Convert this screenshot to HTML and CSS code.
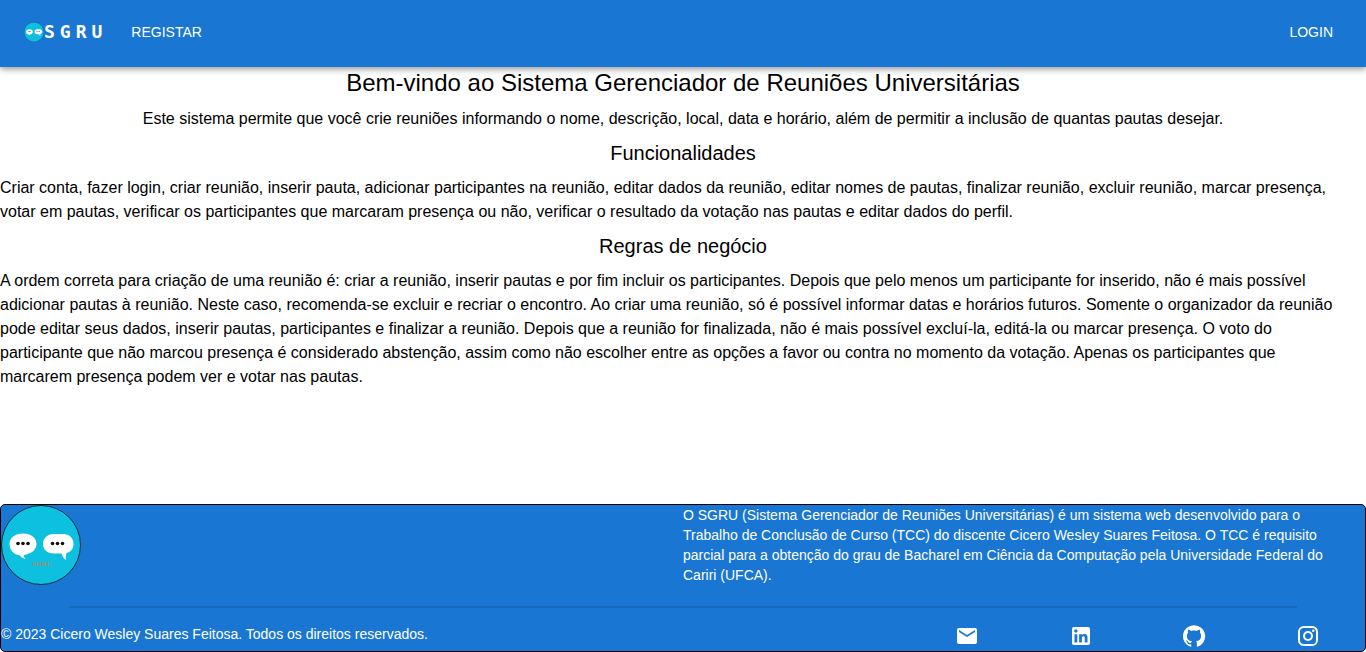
FILE: index.html
```html
<!DOCTYPE html>
<html lang="pt-BR">
<head>
<meta charset="utf-8">
<meta name="viewport" content="width=device-width, initial-scale=1">
<title>SGRU</title>
<link rel="stylesheet" href="styles.css">
</head>
<body>
<svg class="sprite" aria-hidden="true">
  <symbol id="logo" viewBox="0 0 80 80">
    <circle cx="40" cy="40" r="39.5" fill="#0dc0df" stroke="#0c2f40"/>
    <path fill="#fff" d="M22 28.500c8 0 13.500 4.500 13.500 10.500 0 5-4 9-9.500 10.200-1 .4-2.700.5-3.200 1.300-.3 1 .8 2.600 2 3.700-2.600-.6-5-2.200-6.300-4C12.500 49.500 8.500 45 8.500 39c0-6 5.500-10.500 13.500-10.500z"/>
    <path fill="#fff" d="M53 29h9c7 0 10.500 4.500 10.500 10 0 4.500-2.500 8-7 9-.8 2-.5 5-.9 7-1.800-1.500-3.300-3.600-4.100-6.500H53c-7 0-11-4-11-9.500S46 29 53 29z"/>
    <g fill="#111"><circle cx="17" cy="38.500" r="1.800"/><circle cx="22" cy="38.500" r="1.800"/><circle cx="27" cy="38.500" r="1.800"/><circle cx="51.500" cy="38.500" r="1.800"/><circle cx="56.500" cy="38.500" r="1.800"/><circle cx="61.500" cy="38.500" r="1.800"/></g>
    <text x="40.500" y="61" text-anchor="middle" class="logo-caption">SGRU</text>
  </symbol>
</svg>
<header class="appbar">
  <nav class="toolbar">
    <a class="brand" href="#"><svg class="brand-icon" aria-hidden="true"><use href="#logo"/></svg><span>SGRU</span></a>
    <a class="nav-link" href="#">REGISTAR</a>
    <a class="nav-link nav-end" href="#">LOGIN</a>
  </nav>
</header>
<main class="content">
  <h1 class="title">Bem-vindo ao Sistema Gerenciador de Reuniões Universitárias</h1>
  <p class="text centered">Este sistema permite que você crie reuniões informando o nome, descrição, local, data e horário, além de permitir a inclusão de quantas pautas desejar.</p>
  <h2 class="subtitle">Funcionalidades</h2>
  <p class="text body-text">Criar conta, fazer login, criar reunião, inserir pauta, adicionar participantes na reunião, editar dados da reunião, editar nomes de pautas, finalizar reunião, excluir reunião, marcar presença, votar em pautas, verificar os participantes que marcaram presença ou não, verificar o resultado da votação nas pautas e editar dados do perfil.</p>
  <h2 class="subtitle">Regras de negócio</h2>
  <p class="text body-text">A ordem correta para criação de uma reunião é: criar a reunião, inserir pautas e por fim incluir os participantes. Depois que pelo menos um participante for inserido, não é mais possível adicionar pautas à reunião. Neste caso, recomenda-se excluir e recriar o encontro. Ao criar uma reunião, só é possível informar datas e horários futuros. Somente o organizador da reunião pode editar seus dados, inserir pautas, participantes e finalizar a reunião. Depois que a reunião for finalizada, não é mais possível excluí-la, editá-la ou marcar presença. O voto do participante que não marcou presença é considerado abstenção, assim como não escolher entre as opções a favor ou contra no momento da votação. Apenas os participantes que<br>marcarem presença podem ver e votar nas pautas.</p>
</main>
<footer class="footer">
  <div class="about">
    <svg class="about-logo" role="img" aria-label="SGRU"><use href="#logo"/></svg>
    <p class="small about-text">O SGRU (Sistema Gerenciador de Reuniões Universitárias) é um sistema web desenvolvido para o Trabalho de Conclusão de Curso (TCC) do discente Cicero Wesley Suares Feitosa. O TCC é requisito parcial para a obtenção do grau de Bacharel em Ciência da Computação pela Universidade Federal do Cariri (UFCA).</p>
  </div>
  <hr class="divider">
  <div class="legal">
    <p class="small">© 2023 Cicero Wesley Suares Feitosa. Todos os direitos reservados.</p>
    <div class="social">
      <a class="social-link" href="#" aria-label="E-mail"><svg class="icon" viewBox="0 0 24 24"><path d="M20 4H4c-1.100 0-1.990.9-1.990 2L2 18c0 1.100.9 2 2 2h16c1.100 0 2-.9 2-2V6c0-1.100-.9-2-2-2zm0 4l-8 5-8-5V6l8 5 8-5v2z"/></svg></a>
      <a class="social-link" href="#" aria-label="LinkedIn"><svg class="icon" viewBox="0 0 24 24"><path d="M19 3a2 2 0 0 1 2 2v14a2 2 0 0 1-2 2H5a2 2 0 0 1-2-2V5a2 2 0 0 1 2-2h14m-.5 15.500v-5.300a3.260 3.260 0 0 0-3.260-3.260c-.85 0-1.840.52-2.320 1.300v-1.110h-2.790v8.370h2.790v-4.930c0-.77.62-1.400 1.390-1.400a1.400 1.400 0 0 1 1.400 1.400v4.930h2.790M6.880 8.560a1.680 1.680 0 0 0 1.680-1.680c0-.93-.75-1.690-1.680-1.690a1.690 1.690 0 0 0-1.690 1.690c0 .93.76 1.680 1.690 1.680m1.390 9.940v-8.370H5.500v8.370h2.770z"/></svg></a>
      <a class="social-link" href="#" aria-label="GitHub"><svg class="icon" viewBox="0 0 24 24"><path d="M12 1.270a11 11 0 0 0-3.480 21.460c.55.090.73-.28.73-.55v-1.840c-3.030.64-3.670-1.460-3.670-1.460-.55-1.290-1.280-1.650-1.280-1.650-.92-.65.100-.65.100-.65 1.100 0 1.730 1.100 1.730 1.100.92 1.650 2.570 1.200 3.210.92a2 2 0 0 1 .64-1.470c-2.470-.27-5.040-1.190-5.040-5.500 0-1.100.46-2.100 1.200-2.840a3.760 3.760 0 0 1 0-2.930s.91-.28 3.110 1.100c1.800-.49 3.700-.49 5.500 0 2.100-1.380 3.020-1.100 3.020-1.100a3.760 3.760 0 0 1 .1 2.930c.83.74 1.200 1.740 1.200 2.940 0 4.210-2.570 5.130-5.040 5.400.45.370.82.920.82 2.020v3.030c0 .27.100.64.730.55A11 11 0 0 0 12 1.270"/></svg></a>
      <a class="social-link" href="#" aria-label="Instagram"><svg class="icon" viewBox="0 0 24 24"><path d="M7.800 2h8.400C19.400 2 22 4.600 22 7.800v8.400a5.800 5.800 0 0 1-5.800 5.800H7.800C4.600 22 2 19.400 2 16.200V7.800A5.800 5.800 0 0 1 7.800 2m-.2 2A3.600 3.600 0 0 0 4 7.600v8.800C4 18.390 5.610 20 7.600 20h8.800a3.600 3.600 0 0 0 3.600-3.600V7.600C20 5.610 18.390 4 16.400 4H7.600m9.650 1.500a1.250 1.250 0 0 1 1.250 1.250A1.250 1.250 0 0 1 17.250 8 1.250 1.250 0 0 1 16 6.750a1.250 1.250 0 0 1 1.250-1.250M12 7a5 5 0 0 1 5 5 5 5 0 0 1-5 5 5 5 0 0 1-5-5 5 5 0 0 1 5-5m0 2a3 3 0 0 0-3 3 3 3 0 0 0 3 3 3 3 0 0 0 3-3 3 3 0 0 0-3-3z"/></svg></a>
    </div>
  </div>
</footer>
</body>
</html>
```
FILE: styles.css
```css
* { box-sizing: border-box; }

body {
  margin: 0;
  min-height: 100vh;
  display: flex;
  flex-direction: column;
  font-family: "Liberation Sans", Arial, sans-serif;
  color: #000;
  background: #fff;
}

h1, h2, p { margin: 0; font-weight: 400; }

.sprite { display: none; }

.logo-caption {
  font: 700 7px "Liberation Serif", serif;
  fill: #a58a6c;
}

.appbar {
  background: #1976d2;
  color: #fff;
  box-shadow: 0 2px 4px -1px rgba(0, 0, 0, .2), 0 4px 5px 0 rgba(0, 0, 0, .14), 0 1px 10px 0 rgba(0, 0, 0, .12);
}

.toolbar {
  display: flex;
  align-items: center;
  min-height: 67px;
  padding: 0 33px 3px 24px;
}

.brand {
  display: flex;
  align-items: center;
  margin-right: 24px;
  color: inherit;
  text-decoration: none;
  font: 700 18px/24px "DejaVu Sans Mono", monospace;
  letter-spacing: 5px;
}

.brand-icon { width: 20px; height: 20px; }

.nav-link {
  color: inherit;
  text-decoration: none;
  font-size: 14px;
  line-height: 24px;
}

.nav-end { margin-left: auto; }

.content { flex: 1; }

.title {
  margin-bottom: 8px;
  font-size: 24px;
  line-height: 32px;
  text-align: center;
}

.subtitle {
  margin-bottom: 7px;
  font-size: 20px;
  line-height: 32px;
  text-align: center;
}

.text {
  margin-bottom: 6px;
  font-size: 16px;
  line-height: 24px;
}

.centered { text-align: center; }

.body-text, .about-text { padding-right: 16px; }

.footer {
  border: 1px solid #000;
  border-radius: 5px;
  background: #1976d2;
  color: #fff;
}

.about { display: grid; grid-template-columns: 1fr 1fr; }

.about-logo { width: 80px; height: 80px; }

.small { font-size: 14px; line-height: 20px; }

.divider {
  width: 90%;
  height: 2px;
  margin: 21px auto 16px;
  border: 0;
  background: #1669bb;
}

.legal { display: grid; grid-template-columns: 2fr 1fr; padding-bottom: 3px; }

.social { display: grid; grid-template-columns: repeat(4, 1fr); }

.social-link { display: flex; justify-content: center; color: inherit; }

.icon { width: 24px; height: 24px; fill: currentColor; }
```
